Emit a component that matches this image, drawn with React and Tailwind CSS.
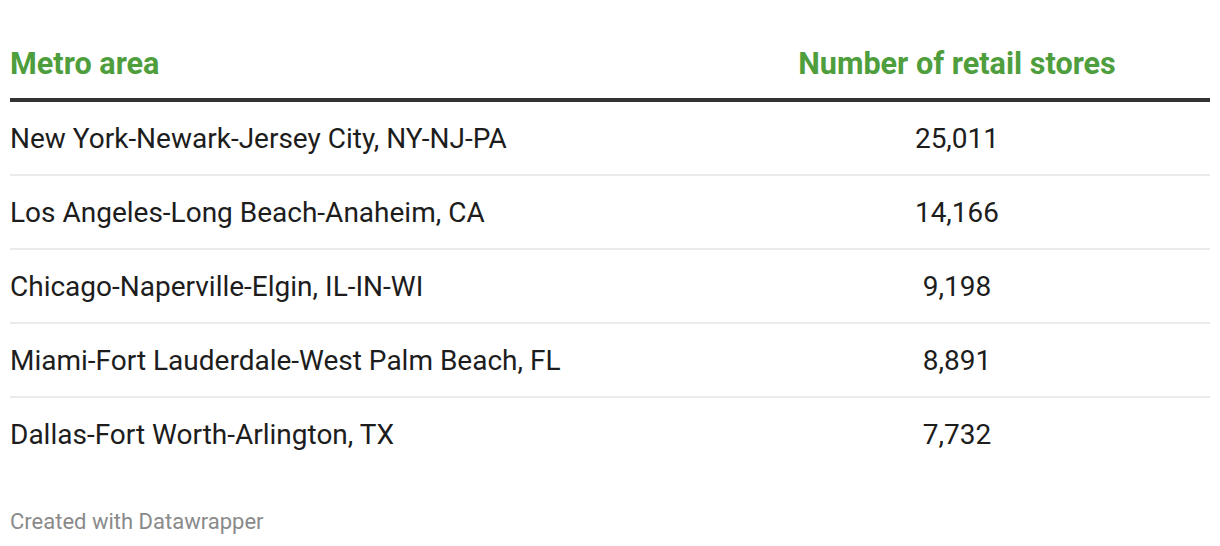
import React from 'react';

const rows = [
  { area: 'New York-Newark-Jersey City, NY-NJ-PA', stores: '25,011' },
  { area: 'Los Angeles-Long Beach-Anaheim, CA', stores: '14,166' },
  { area: 'Chicago-Naperville-Elgin, IL-IN-WI', stores: '9,198' },
  { area: 'Miami-Fort Lauderdale-West Palm Beach, FL', stores: '8,891' },
  { area: 'Dallas-Fort Worth-Arlington, TX', stores: '7,732' },
];

const App = () => {
  return (
    <div className="w-[1220px] h-[546px] bg-white px-[10px] font-['Roboto',sans-serif] text-[#1d1d1d]">
      {/* Header */}
      <div className="flex pt-[46px] pb-[16px] border-b-4 border-[#333333] text-[30.6px] leading-[36px] font-bold text-[#4f9e3d]">
        <div className="w-[694px]">Metro area</div>
        <div className="flex-1 text-center">Number of retail stores</div>
      </div>

      {/* Rows */}
      <div>
        {rows.map((row, i) => (
          <div
            key={row.area}
            className={`flex pt-[21px] pb-[19px] text-[28px] leading-[32px] ${i < rows.length - 1 ? 'border-b-2 border-[#ebebeb]' : ''}`}
          >
            <div className="w-[694px]">{row.area}</div>
            <div className="flex-1 text-center tabular-nums">{row.stores}</div>
          </div>
        ))}
      </div>

      {/* Footer */}
      <div className="mt-[38px] text-[22px] leading-[28px] text-[#8a8a8a]">Created with Datawrapper</div>
    </div>
  );
};

export default App;
